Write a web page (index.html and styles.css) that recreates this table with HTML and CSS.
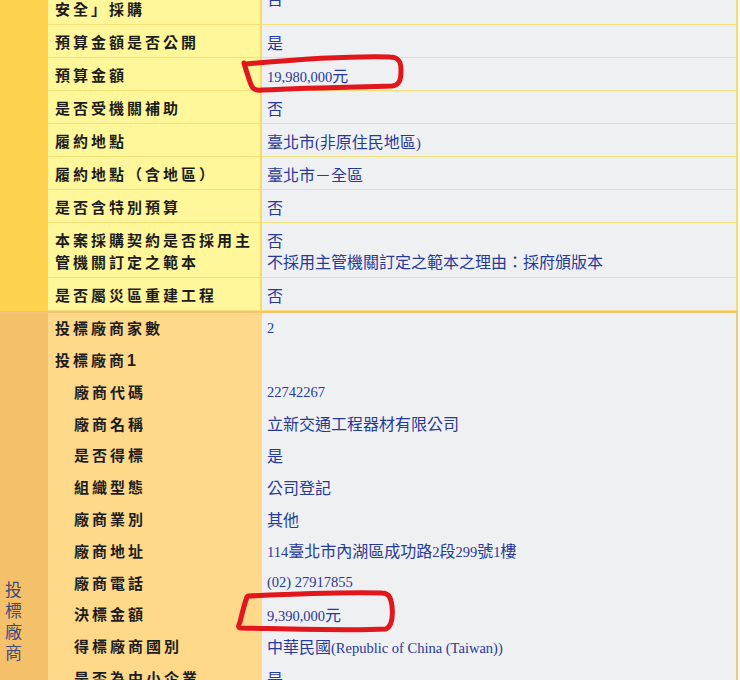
FILE: index.html
```html
<!DOCTYPE html>
<html lang="zh-Hant">
<head>
<meta charset="utf-8">
<title>決標公告</title>
<link rel="stylesheet" href="styles.css">
</head>
<body>
<div class="page">
  <div class="sec sec-a">
    <div class="side side-a"></div>
    <div class="lbl">是否屬「涉及國家<br>安全」採購</div><div class="val">否</div>
    <div class="lbl">預算金額是否公開</div><div class="val">是</div>
    <div class="lbl">預算金額</div><div class="val"><span><span class="en">19,980,000</span>元</span></div>
    <div class="lbl">是否受機關補助</div><div class="val">否</div>
    <div class="lbl">履約地點</div><div class="val"><span>臺北市<span class="en">(</span>非原住民地區<span class="en">)</span></span></div>
    <div class="lbl">履約地點（含地區）</div><div class="val">臺北市－全區</div>
    <div class="lbl">是否含特別預算</div><div class="val">否</div>
    <div class="lbl">本案採購契約是否採用主管機關訂定之範本</div><div class="val"><span>否</span><span>不採用主管機關訂定之範本之理由：採府頒版本</span></div>
    <div class="lbl">是否屬災區重建工程</div><div class="val">否</div>
  </div>
  <div class="sec sec-b">
    <div class="side side-b"><span class="vtext">投標廠商</span></div>
    <div class="lbl">投標廠商家數</div><div class="val"><span class="en">2</span></div>
    <div class="lbl">投標廠商<span class="lbl-num">1</span></div><div class="val"></div>
    <div class="lbl sub">廠商代碼</div><div class="val"><span class="en">22742267</span></div>
    <div class="lbl sub">廠商名稱</div><div class="val">立新交通工程器材有限公司</div>
    <div class="lbl sub">是否得標</div><div class="val">是</div>
    <div class="lbl sub">組織型態</div><div class="val">公司登記</div>
    <div class="lbl sub">廠商業別</div><div class="val">其他</div>
    <div class="lbl sub">廠商地址</div><div class="val"><span><span class="en">114</span>臺北市內湖區成功路<span class="en">2</span>段<span class="en">299</span>號<span class="en">1</span>樓</span></div>
    <div class="lbl sub">廠商電話</div><div class="val"><span class="en">(02) 27917855</span></div>
    <div class="lbl sub">決標金額</div><div class="val"><span><span class="en">9,390,000</span>元</span></div>
    <div class="lbl sub">得標廠商國別</div><div class="val"><span>中華民國<span class="en">(Republic of China (Taiwan))</span></span></div>
    <div class="lbl sub">是否為中小企業</div><div class="val">是</div>
    <div class="lbl sub">雇用員工總人數</div><div class="val">否</div>
  </div>
</div>
<svg class="marks" width="740" height="680" viewBox="0 0 740 680" aria-hidden="true">
  <path d="M246 64 C290 60 350 56 390 57 C399 57 401 62 401 70 C401 79 400 85 392 86 C350 87 300 88 262 90 C254 91 252 88 250 82 C248 76 246 70 244 63"/>
  <path d="M248 596 C290 594 340 592 382 593 C389 593 391 598 392 606 C393 616 392 626 386 629 C350 631 290 629 241 628 C238 628 238 626 240 622 C242 614 244 605 247 597"/>
</svg>
</body>
</html>
```

FILE: styles.css
```css
html, body {
  margin: 0;
  padding: 0;
  background: #ffffff;
}

.page {
  width: 738px;
  margin-top: -30px;
}

.sec {
  display: grid;
  grid-template-columns: 48px 212px 478px;
}

.side {
  grid-column: 1;
}

.side-a {
  grid-row: 1 / span 9;
}

.side-b {
  grid-row: 1 / span 13;
}

.lbl {
  grid-column: 2;
  padding: 6px 4px 4px 7px;
  font-family: "Noto Sans CJK TC", "Noto Sans", sans-serif;
  font-weight: 700;
  font-size: 15px;
  line-height: 22px;
  letter-spacing: 3px;
  color: #1c1c1c;
}

.lbl.sub {
  padding-left: 26px;
}

.lbl-num {
  font-family: "Liberation Sans", "Noto Sans", sans-serif;
  font-weight: 700;
  font-size: 16px;
  line-height: 1;
  letter-spacing: 0;
}

.val {
  grid-column: 3;
  display: flex;
  flex-direction: column;
  justify-content: center;
  padding: 6px 5px 4px 5px;
  background: #eef0f1;
  font-family: "Noto Sans CJK TC", "Noto Sans", sans-serif;
  font-weight: 400;
  font-size: 16px;
  line-height: 21px;
  color: #27399b;
}

.en {
  font-family: "Liberation Serif", serif;
  font-size: 14.5px;
  line-height: 1;
}

/* section A: yellow */
.sec-a .side {
  background: #fdd24f;
}

.sec-a .lbl {
  background: #fff799;
  border-bottom: 1px solid #f8df78;
}

.sec-a .val {
  border-left: 2px solid #f6da6a;
  border-right: 2px solid #f6da6a;
  border-bottom: 1px solid #f8df78;
}

/* section B: orange */
.sec-b {
  border-top: 2px solid #f4c374;
}

.sec-b .side {
  background: #f5c06a;
}

.sec-b .lbl {
  background: #ffd98a;
  padding-top: 4.3px;
  padding-bottom: 5.5px;
}

.sec-b .val {
  border-left: 2px solid #ffd98a;
  border-right: 2px solid #f4c77e;
  padding-top: 4.3px;
  padding-bottom: 5.5px;
}

.vtext {
  display: block;
  margin: 268px 0 0 4px;
  writing-mode: vertical-rl;
  text-orientation: upright;
  font-family: "Noto Sans CJK TC", "Noto Sans", sans-serif;
  font-size: 17px;
  line-height: 18px;
  letter-spacing: 4px;
  color: #3e4a7c;
}

.marks {
  position: absolute;
  top: 0;
  left: 0;
  pointer-events: none;
  fill: none;
  stroke: #e2161d;
  stroke-width: 5;
  stroke-linecap: round;
  stroke-linejoin: round;
}
```
